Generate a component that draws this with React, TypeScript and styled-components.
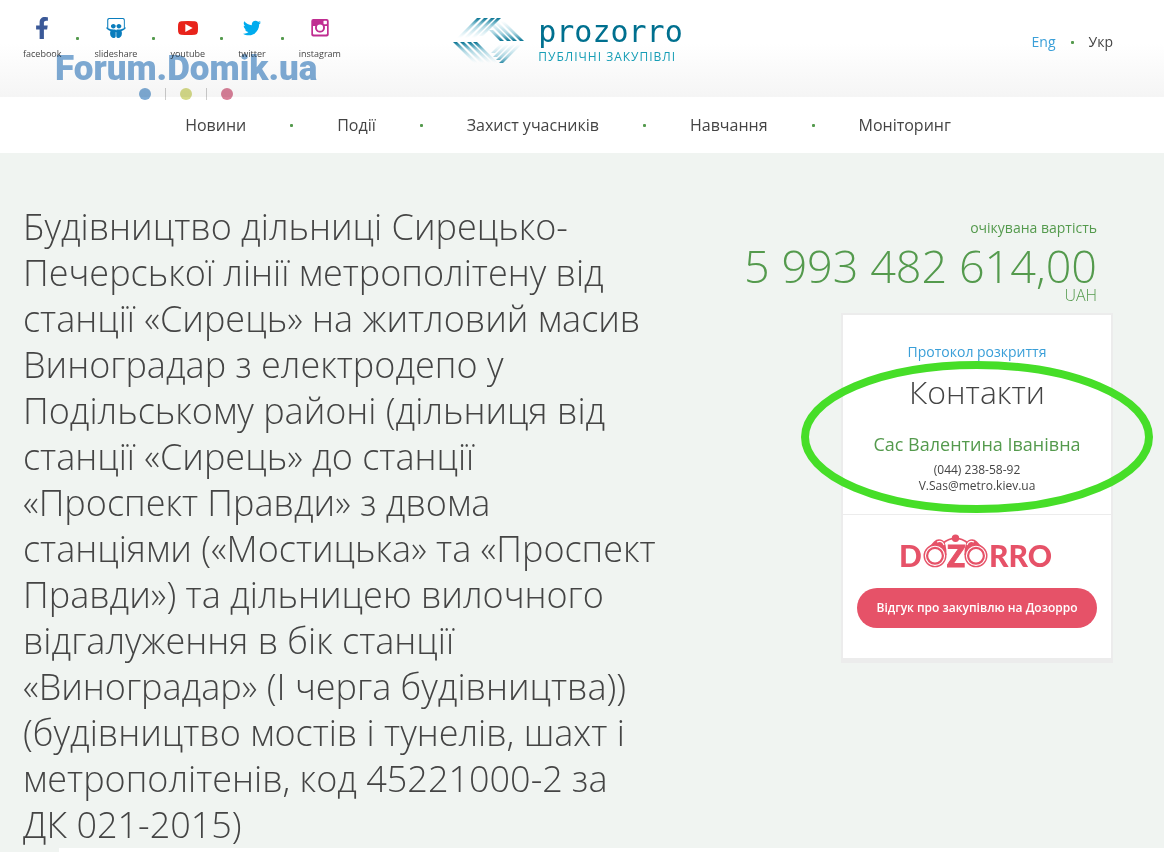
import React from 'react';
import styled, { createGlobalStyle } from 'styled-components';
import { FaFacebookF, FaSlideshare, FaTwitter } from 'react-icons/fa';

const GlobalStyle = createGlobalStyle`
  *, *::before, *::after { box-sizing: border-box; }
  body {
    margin: 0;
    background: #f0f4f1;
    color: #444;
    font-family: 'Open Sans', 'Noto Sans', sans-serif;
  }
  a { color: inherit; text-decoration: none; }
  h1, h2, p { margin: 0; }
`;

const Page = styled.div`
  position: relative;
  overflow-x: hidden;
`;

const Header = styled.header`
  display: grid;
  grid-template-columns: 1fr auto 1fr;
  align-items: start;
  height: 97px;
  padding: 0 51px 0 23px;
  background: linear-gradient(#fff 45%, #f5f5f5);
`;

const Socials = styled.nav`
  display: flex;
  align-items: center;
  gap: 15px;
  padding-top: 17px;
`;

const Social = styled.a<{ $color: string }>`
  display: flex;
  flex-direction: column;
  align-items: center;
  gap: 9px;
  color: ${(p) => p.$color};
  svg { display: block; height: 22px; }
`;

const SocialLabel = styled.span`
  color: #444;
  font-size: 9px;
  line-height: 12px;
`;

const Dot = styled.span`
  flex: none;
  width: 3px;
  height: 3px;
  border-radius: 1px;
  background: #549a4d;
`;

const Brand = styled.a`
  display: flex;
  align-items: flex-start;
  gap: 13px;
  padding-top: 17px;
`;

const BrandText = styled.span`
  display: flex;
  flex-direction: column;
`;

const BrandName = styled.span`
  color: #00708f;
  font-family: 'DejaVu Sans Mono', monospace;
  font-size: 30px;
  line-height: 30px;
`;

const BrandTag = styled.span`
  color: #159db5;
  font-size: 12px;
  line-height: 20px;
  letter-spacing: 1px;
  white-space: nowrap;
`;

const Languages = styled.nav`
  display: flex;
  justify-content: flex-end;
  align-items: center;
  gap: 15px;
  padding-top: 32px;
  font-size: 14px;
  line-height: 20px;
`;

const LanguageLink = styled.a<{ $active?: boolean }>`
  color: ${(p) => (p.$active ? '#444' : '#3a9fd8')};
`;

const Menu = styled.nav`
  display: flex;
  justify-content: center;
  align-items: center;
  gap: 44px;
  height: 56px;
  padding: 0 51px 0 23px;
  background: #fff;
  font-size: 16px;
  line-height: 24px;
  white-space: nowrap;
`;

const Main = styled.main`
  display: flex;
  justify-content: space-between;
  align-items: flex-start;
  gap: 24px;
  padding: 51px 51px 0 23px;
`;

const Title = styled.h1`
  font-size: 36px;
  font-weight: 300;
  line-height: 46px;
  white-space: nowrap;
`;

const Aside = styled.aside`
  display: flex;
  flex-direction: column;
  align-items: flex-end;
  padding-top: 14px;
`;

const Cost = styled.div`
  display: flex;
  flex-direction: column;
  align-items: flex-end;
  padding-right: 16px;
  color: #549a4d;
  white-space: nowrap;
`;

const CostLabel = styled.span`
  font-size: 14px;
  line-height: 20px;
`;

const CostAmount = styled.span`
  margin-top: 5px;
  font-size: 45px;
  font-weight: 300;
  line-height: 46px;
`;

const CostCurrency = styled.span`
  margin-top: -4px;
  font-size: 16px;
  font-weight: 300;
  line-height: 20px;
`;

const Card = styled.section`
  width: 272px;
  margin-top: 8px;
  border: 2px solid #ececec;
  border-bottom-width: 5px;
  background: #fff;
  text-align: center;
`;

const Contacts = styled.div`
  height: 200px;
  padding-top: 27px;
  border-bottom: 1px solid #ececec;
`;

const ProtocolLink = styled.a`
  display: block;
  color: #3a9fd8;
  font-size: 14px;
  line-height: 20px;
`;

const ContactsTitle = styled.h2`
  margin-top: 8px;
  font-size: 32px;
  font-weight: 300;
  line-height: 44px;
`;

const ContactName = styled.p`
  margin-top: 18px;
  color: #549a4d;
  font-size: 18px;
  line-height: 24px;
`;

const ContactDetails = styled.div`
  margin-top: 6px;
`;

const ContactLine = styled.p`
  font-size: 12px;
  line-height: 16px;
`;

const Feedback = styled.div`
  display: flex;
  flex-direction: column;
  align-items: center;
  gap: 11px;
  padding: 19px 14px 30px;
`;

const FeedbackButton = styled.button`
  width: 100%;
  height: 40px;
  padding: 0;
  border: 0;
  border-radius: 20px;
  background: #e65268;
  color: #fff;
  font: 600 12px/16px 'Open Sans', 'Noto Sans', sans-serif;
`;

const NextSection = styled.div`
  height: 4px;
  margin-left: 59px;
  background: #fff;
`;

const Watermark = styled.div`
  position: absolute;
  top: 49px;
  left: 55px;
  display: flex;
  flex-direction: column;
  align-items: center;
  color: #7eabd5;
  font-family: Roboto, sans-serif;
  font-size: 35px;
  font-weight: 900;
  line-height: 39px;
  mix-blend-mode: multiply;
  pointer-events: none;
`;

const WatermarkDots = styled.div`
  display: flex;
  align-items: center;
  gap: 14px;
`;

const WatermarkDot = styled.span<{ $color: string }>`
  width: 12px;
  height: 12px;
  border-radius: 50%;
  background: ${(p) => p.$color};
`;

const WatermarkBar = styled.span`
  width: 1px;
  height: 12px;
  background: #ccc;
`;

const Marker = styled.svg`
  position: absolute;
  top: 360px;
  right: 11px;
  pointer-events: none;
`;

const YoutubeIcon = () => (
  <svg width="20" height="22" viewBox="0 0 20 22" aria-hidden="true">
    <path d="M3 4.3Q10 3.6 17 4.3Q19.5 4.5 19.8 7Q20.2 11 19.8 15Q19.5 17.5 17 17.7Q10 18.4 3 17.7Q.5 17.5.2 15Q-.2 11 .2 7Q.5 4.5 3 4.3Z" fill="#e8231b" />
    <path d="M7.3 7v8l7.4-4z" fill="#fff" />
  </svg>
);

const InstagramIcon = () => (
  <svg width="18" height="22" viewBox="0 0 18 22" aria-hidden="true">
    <rect x=".3" y="2" width="17.4" height="17.4" rx="2" fill="#c02d91" />
    <path d="M2 9h2.600a4.700 4.700 0 1 0 8.800 0H16v7.600q0 .9-.9.9H2.900q-.9 0-.9-.9z" fill="#fff" />
    <circle cx="9" cy="10.700" r="4" fill="#fff" stroke="#c02d91" strokeWidth="1.800" />
    <rect x="12.500" y="3.800" width="3.400" height="3.400" rx=".6" fill="#fff" />
  </svg>
);

type Stripe = [number, number, number, number];

const stripeGroups: { id: string; from: number; to: number; stripes: Stripe[] }[] = [
  { id: 'upper-left', from: 1, to: 21, stripes: [[24, 1, 2, 23], [31, 1, 9, 23], [38, 1, 18, 21], [44, 1, 26, 19]] },
  { id: 'upper-right', from: 24, to: 4, stripes: [[47, 24, 36, 13], [54, 24, 36, 6], [60, 24, 40, 4], [67, 24, 47, 4]] },
  { id: 'lower-left', from: 25, to: 46, stripes: [[0, 25, 21, 46], [7, 25, 28, 46], [14, 25, 35, 46], [20, 25, 41, 46]] },
  { id: 'lower-right', from: 48, to: 27, stripes: [[46, 46, 65, 27], [43, 43, 59, 27], [40, 40, 53, 27], [38, 36, 47, 27]] },
];

const ProzorroMark = () => (
  <svg width="72" height="48" viewBox="0 0 72 48" aria-hidden="true">
    <defs>
      {stripeGroups.map((g) => (
        <linearGradient key={g.id} id={g.id} gradientUnits="userSpaceOnUse" x1="0" x2="0" y1={g.from} y2={g.to}>
          <stop offset="0" stopColor="#087392" />
          <stop offset=".4" stopColor="#2c96b4" stopOpacity=".4" />
          <stop offset="1" stopColor="#5db9d2" stopOpacity="0" />
        </linearGradient>
      ))}
    </defs>
    {stripeGroups.map((g) =>
      g.stripes.map(([x1, y1, x2, y2]) => (
        <polygon key={`${x1}-${y1}`} points={`${x1},${y1} ${x1 + 4},${y1} ${x2 + 4},${y2} ${x2},${y2}`} fill={`url(#${g.id})`} />
      )),
    )}
  </svg>
);

const Lens = ({ cx }: { cx: number }) => (
  <g fill="#fff" stroke="#e65268">
    <circle cx={cx} cy="21.8" r="10.8" strokeWidth="1.4" />
    <circle cx={cx} cy="21.8" r="7.9" strokeWidth="2.2" />
  </g>
);

const DozorroLogo = () => (
  <svg width="156" height="43" viewBox="-1 0 156 43" role="img" aria-label="Dozorro">
    <g fill="#e65268" fontFamily="Lato, sans-serif" fontWeight="900" fontSize="30">
      <text x="-1" y="33">D</text>
      <text x="47" y="33" fontFamily="'Liberation Sans Narrow', Lato, sans-serif" stroke="#e65268" strokeWidth="1">Z</text>
      <text x="89" y="33">RRO</text>
    </g>
    <g fill="#e65268">
      <path d="M24.500 18L34 7.500Q38 3.500 43 6.500Q46.500 9 46.500 21Z" />
      <path d="M86.500 18L77 7.500Q73 3.500 68 6.500Q64.500 9 64.500 21Z" />
      <circle cx="55.500" cy="4.200" r="3.700" />
      <path d="M43 9Q49 4.500 55.500 4.200Q62 4.500 68 9" fill="none" stroke="#e65268" strokeWidth="1.800" />
    </g>
    <path d="M37 8Q42 6 44 11M74 8Q69 6 67 11" fill="none" stroke="#fff" strokeWidth="1.100" />
    <Lens cx={35} />
    <Lens cx={76} />
  </svg>
);

const socials = [
  { label: 'facebook', color: '#3b5998', icon: <FaFacebookF size={20} /> },
  { label: 'slideshare', color: '#0a7dbd', icon: <FaSlideshare size={20} /> },
  { label: 'youtube', color: '#e8231b', icon: <YoutubeIcon /> },
  { label: 'twitter', color: '#00acee', icon: <FaTwitter size={18} /> },
  { label: 'instagram', color: '#c02d91', icon: <InstagramIcon /> },
];

const menuItems = ['Новини', 'Події', 'Захист учасників', 'Навчання', 'Моніторинг'];

const titleLines = [
  'Будівництво дільниці Сирецько-',
  'Печерської лінії метрополітену від',
  'станції «Сирець» на житловий масив',
  'Виноградар з електродепо у',
  'Подільському районі (дільниця від',
  'станції «Сирець» до станції',
  '«Проспект Правди» з двома',
  'станціями («Мостицька» та «Проспект',
  'Правди») та дільницею вилочного',
  'відгалуження в бік станції',
  '«Виноградар» (І черга будівництва))',
  '(будівництво мостів і тунелів, шахт і',
  'метрополітенів, код 45221000-2 за',
  'ДК 021-2015)',
];

export default function App() {
  return (
    <Page>
      <GlobalStyle />
      <Header>
        <Socials>
          {socials.map((s, i) => (
            <React.Fragment key={s.label}>
              {i > 0 && <Dot />}
              <Social href="#" $color={s.color}>
                {s.icon}
                <SocialLabel>{s.label}</SocialLabel>
              </Social>
            </React.Fragment>
          ))}
        </Socials>
        <Brand href="#">
          <ProzorroMark />
          <BrandText>
            <BrandName>prozorro</BrandName>
            <BrandTag>ПУБЛІЧНІ ЗАКУПІВЛІ</BrandTag>
          </BrandText>
        </Brand>
        <Languages>
          <LanguageLink href="#">Eng</LanguageLink>
          <Dot />
          <LanguageLink href="#" $active>Укр</LanguageLink>
        </Languages>
      </Header>
      <Menu>
        {menuItems.map((item, i) => (
          <React.Fragment key={item}>
            {i > 0 && <Dot />}
            <a href="#">{item}</a>
          </React.Fragment>
        ))}
      </Menu>
      <Main>
        <Title>
          {titleLines.map((line, i) => (
            <React.Fragment key={line}>
              {i > 0 && <br />}
              {line}
            </React.Fragment>
          ))}
        </Title>
        <Aside>
          <Cost>
            <CostLabel>очікувана вартість</CostLabel>
            <CostAmount>5 993 482 614,00</CostAmount>
            <CostCurrency>UAH</CostCurrency>
          </Cost>
          <Card>
            <Contacts>
              <ProtocolLink href="#">Протокол розкриття</ProtocolLink>
              <ContactsTitle>Контакти</ContactsTitle>
              <ContactName>Сас Валентина Іванівна</ContactName>
              <ContactDetails>
                <ContactLine>(044) 238-58-92</ContactLine>
                <ContactLine>V.Sas@metro.kiev.ua</ContactLine>
              </ContactDetails>
            </Contacts>
            <Feedback>
              <DozorroLogo />
              <FeedbackButton type="button">Відгук про закупівлю на Дозорро</FeedbackButton>
            </Feedback>
          </Card>
        </Aside>
      </Main>
      <NextSection />
      <Watermark>
        <span>Forum.Domik.ua</span>
        <WatermarkDots>
          <WatermarkDot $color="#7eabd5" />
          <WatermarkBar />
          <WatermarkDot $color="#d5da88" />
          <WatermarkBar />
          <WatermarkDot $color="#d88098" />
        </WatermarkDots>
      </Watermark>
      <Marker width="352" height="154" viewBox="0 0 352 154" aria-hidden="true">
        <ellipse cx="176" cy="77" rx="172" ry="72" fill="none" stroke="#46de28" strokeWidth="8" />
      </Marker>
    </Page>
  );
}
